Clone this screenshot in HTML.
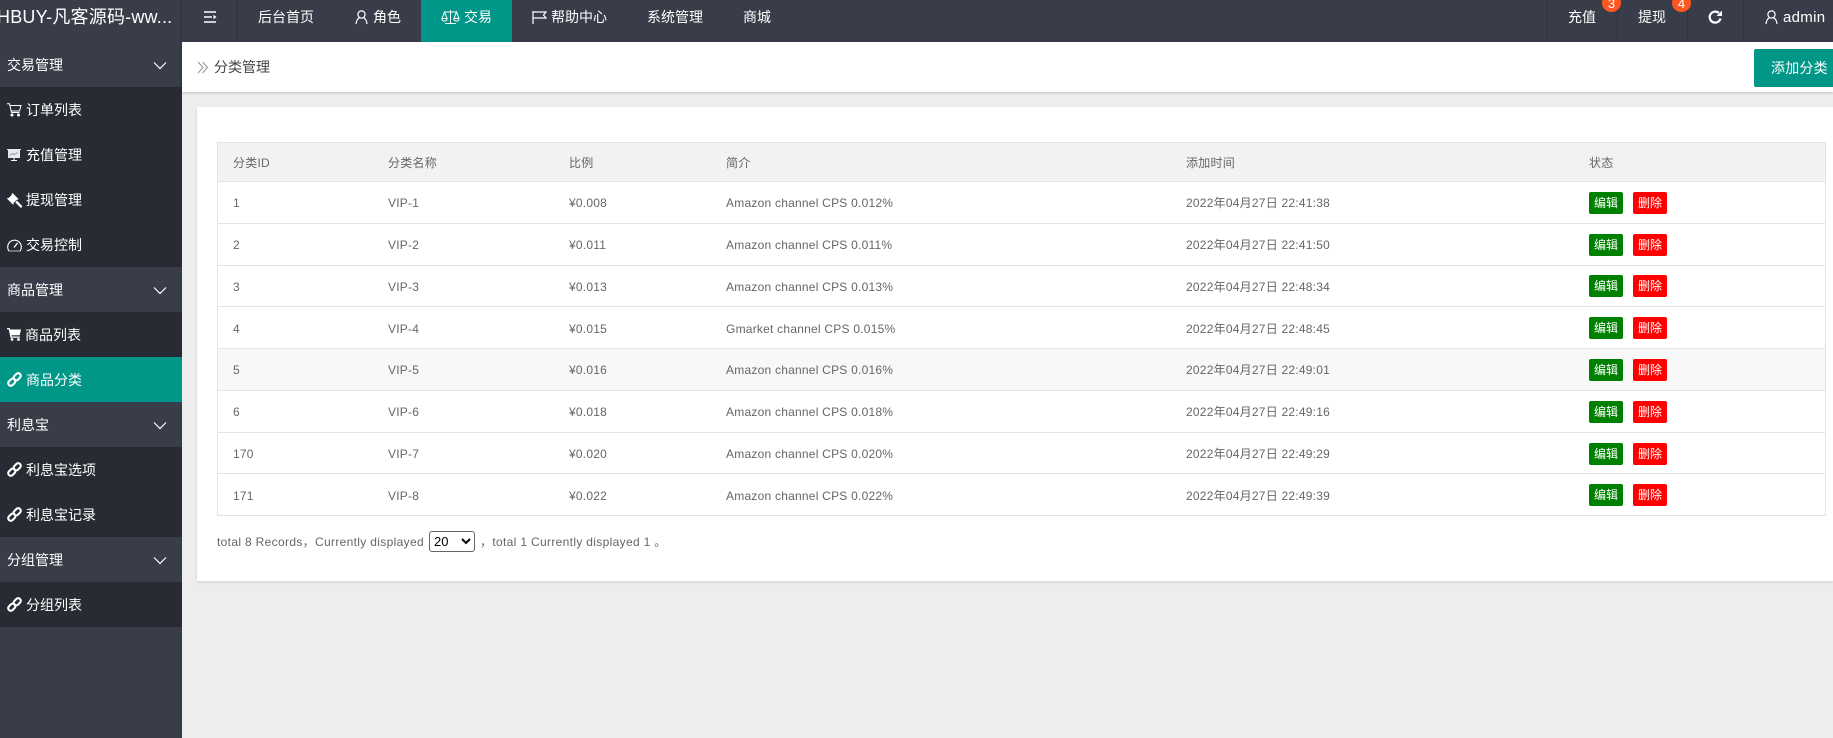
<!DOCTYPE html>
<html lang="zh"><head><meta charset="utf-8"><title>分类管理</title>
<style>
*{box-sizing:border-box}
html,body{margin:0;padding:0;width:1833px;height:738px;overflow:hidden;background:#ededed;font-family:"Liberation Sans","Noto Sans CJK SC",sans-serif}
.a{position:absolute;white-space:nowrap}
svg{position:absolute;display:block;overflow:visible}
#top{position:absolute;left:0;top:0;width:1833px;height:42px;background:#393d49}
.sep{position:absolute;top:0;width:1px;height:42px;background:#2f323d}
.n{position:absolute;top:0;line-height:35px;font-size:14px;color:#fff;white-space:nowrap}
.badge{position:absolute;top:-6px;width:19px;height:18px;border-radius:50%;background:#ff5722;color:#fff;font-size:13px;line-height:20px;text-align:center}
#side{position:absolute;left:0;top:42px;width:182px;height:696px;background:#393d49}
.s{position:absolute;left:0;width:182px;height:45px;font-size:14px;color:#fff;line-height:47px;white-space:nowrap}
.s.g{background:#393d49;padding-left:7px}
.s.i{background:#282b33;padding-left:26px}
.s.on{background:#009688}
#head{position:absolute;left:182px;top:42px;width:1651px;height:50px;background:#fff;box-shadow:0 1px 3px rgba(0,0,0,.18)}
#panel{position:absolute;left:197px;top:107px;width:1636px;height:474px;background:#fff;box-shadow:0 1px 3px rgba(0,0,0,.12)}
#tb{position:absolute;left:217px;top:142px;width:1609px;height:374px;border:1px solid #e4e4e4;border-bottom:1px solid #e2e2e2}
.hr{position:absolute;left:0;width:1607px;height:1px;background:#e4e4e4}
.c{position:absolute;font-size:12px;color:#666;white-space:nowrap;line-height:20px;letter-spacing:.23px}
.f{letter-spacing:.33px}
.b{position:absolute;width:34px;height:22px;border-radius:2px;color:#fff;font-size:12px;line-height:23px;text-align:center}
.gr{background:#008000}.rd{background:#f00}
select{position:absolute;left:429px;top:531px;width:46px;height:21px;font:13px "Liberation Sans",sans-serif;color:#000;background:#fff;border:1px solid #666;border-radius:3px;padding:0}
</style></head><body>
<div id="top">
<div class="a" style="left:-3px;top:0;width:182px;overflow:hidden;line-height:35px;font-size:18px;color:#fff;letter-spacing:.2px">HBUY-凡客源码-ww...</div>
<div class="sep" style="left:181px"></div><div class="sep" style="left:237px"></div>
<svg style="left:203px;top:10px" width="15" height="14"><path d="M1 2h12M1 7h8M1 12h12" stroke="#fff" stroke-width="1.6"/><path d="M10.5 4.8L13.5 7l-3 2.2z" fill="#fff"/></svg>
<div class="n" style="left:258px">后台首页</div>
<svg style="left:355px;top:10px" width="13" height="15" fill="none" stroke="#fff" stroke-width="1.2"><circle cx="6.5" cy="4.5" r="3.6"/><path d="M1 14c.4-3.6 2-5.6 3.500-6.200M12 14c-.4-3.600-2-5.600-3.500-6.200"/></svg>
<div class="n" style="left:373px">角色</div>
<div class="a" style="left:421px;top:0;width:91px;height:42px;background:#009688"></div>
<svg style="left:441px;top:9px" width="19" height="16" fill="none" stroke="#fff" stroke-width="1"><path d="M9.500 1v13M4 14.500h11M3 3h13"/><path d="M3.500 3L1 9.500h5zM15.500 3L13 9.500h5z"/><path d="M.8 9.500a2.700 2.600 0 0 0 5.400 0zM12.800 9.500a2.700 2.600 0 0 0 5.400 0z"/></svg>
<div class="n" style="left:464px">交易</div>
<svg style="left:532px;top:10px" width="15" height="15" fill="none" stroke="#fff" stroke-width="1.200"><path d="M1 1v13M1 2h13l-2.500 3 2.500 3H1"/></svg>
<div class="n" style="left:551px">帮助中心</div>
<div class="n" style="left:647px">系统管理</div>
<div class="n" style="left:743px">商城</div>
<div class="sep" style="left:1547px"></div><div class="sep" style="left:1617px"></div><div class="sep" style="left:1687px"></div><div class="sep" style="left:1743px"></div>
<div class="n" style="left:1568px">充值</div><div class="badge" style="left:1602px">3</div>
<div class="n" style="left:1638px">提现</div><div class="badge" style="left:1672px">4</div>
<svg style="left:1708px;top:10px" width="14" height="14" fill="none" stroke="#fff" stroke-width="2.200"><path d="M12.500 8.500A5.500 5.500 0 1 1 10.800 3"/><path d="M8.500 6h5.500v-5.500z" fill="#fff" stroke="none"/></svg>
<svg style="left:1765px;top:10px" width="13" height="15" fill="none" stroke="#fff" stroke-width="1.200"><circle cx="6.5" cy="4.500" r="3.600"/><path d="M1 14c.4-3.600 2-5.600 3.500-6.200M12 14c-.4-3.600-2-5.600-3.500-6.200"/></svg>
<div class="n" style="left:1783px;font-size:15px;letter-spacing:.3px">admin</div>
</div>

<div id="side">
<div class="s g" style="top:0">交易管理</div>
<div class="s i" style="top:45px">订单列表</div>
<div class="s i" style="top:90px">充值管理</div>
<div class="s i" style="top:135px">提现管理</div>
<div class="s i" style="top:180px">交易控制</div>
<div class="s g" style="top:225px">商品管理</div>
<div class="s i" style="top:270px;padding-left:25px">商品列表</div>
<div class="s i on" style="top:315px">商品分类</div>
<div class="s g" style="top:360px">利息宝</div>
<div class="s i" style="top:405px">利息宝选项</div>
<div class="s i" style="top:450px">利息宝记录</div>
<div class="s g" style="top:495px">分组管理</div>
<div class="s i" style="top:540px">分组列表</div>
</div>
<svg style="left:153px;top:61px" width="14" height="9" fill="none" stroke="#fff" stroke-width="1.200"><path d="M1 1.500l6 6 6-6"/></svg>
<svg style="left:153px;top:286px" width="14" height="9" fill="none" stroke="#fff" stroke-width="1.200"><path d="M1 1.500l6 6 6-6"/></svg>
<svg style="left:153px;top:421px" width="14" height="9" fill="none" stroke="#fff" stroke-width="1.200"><path d="M1 1.500l6 6 6-6"/></svg>
<svg style="left:153px;top:556px" width="14" height="9" fill="none" stroke="#fff" stroke-width="1.200"><path d="M1 1.500l6 6 6-6"/></svg>
<!-- cart outline -->
<svg style="left:7px;top:103px" width="15" height="14" fill="none" stroke="#fff" stroke-width="1"><path d="M0 .7h2.500l2 8.800h8M3 2.500h11l-1.500 5.500H4.300"/><circle cx="5" cy="12" r="1" fill="#fff"/><circle cx="11.500" cy="12" r="1" fill="#fff"/></svg>
<!-- whiteboard -->
<svg style="left:7px;top:149px" width="14" height="13"><path d="M0 0h14v1H13v8H1V1H0z" fill="#e8e8ec"/><path d="M2.500 6.500l3-2 2 1 3-2" stroke="#9a9aa2" fill="none"/><path d="M6.500 9h1v2h-1zM4 11h6v1H4z" fill="#fff"/></svg>
<!-- gavel -->
<svg style="left:7px;top:193px" width="15" height="15" fill="#fff"><path d="M5.500 0l6 6-1 1-.6-.5L6.500 10l.5.6-1 1-6-6 1-1 .6.5L5 1.600 4.500 1z"/><path d="M8.200 9.200l1.700-1.700L14.800 12.600a1.200 1.200 0 0 1-1.700 1.700z"/></svg>
<!-- gauge -->
<svg style="left:7px;top:239px" width="15" height="13" fill="none" stroke="#fff" stroke-width="1.100"><path d="M2 12A6.800 6.800 0 1 1 13 12z"/><path d="M1.800 11.500h11.400v1H1.800z" fill="#bbb" stroke="none"/><path d="M7 8.500L10.500 4" stroke-width="1.400"/></svg>
<!-- cart filled -->
<svg style="left:7px;top:328px" width="14" height="13" fill="#fff"><path d="M0 0h2.700l.4 1.500H14l-1.300 5.700H4.500l.3 1.300h8v1.300H3.500L1.700 1.300H0z"/><circle cx="5" cy="11.500" r="1.400"/><circle cx="11.500" cy="11.500" r="1.400"/></svg>
<!-- links -->
<svg style="left:7px;top:372px" width="15" height="15" fill="none" stroke="#fff" stroke-width="2.100"><rect x="-4" y="-2.600" width="8" height="5.200" rx="2.600" transform="translate(4.800 10.200) rotate(-45)"/><rect x="-4" y="-2.600" width="8" height="5.200" rx="2.600" transform="translate(10.200 4.800) rotate(-45)"/></svg>
<svg style="left:7px;top:462px" width="15" height="15" fill="none" stroke="#fff" stroke-width="2.100"><rect x="-4" y="-2.600" width="8" height="5.200" rx="2.600" transform="translate(4.800 10.200) rotate(-45)"/><rect x="-4" y="-2.600" width="8" height="5.200" rx="2.600" transform="translate(10.200 4.800) rotate(-45)"/></svg>
<svg style="left:7px;top:507px" width="15" height="15" fill="none" stroke="#fff" stroke-width="2.100"><rect x="-4" y="-2.600" width="8" height="5.200" rx="2.600" transform="translate(4.800 10.200) rotate(-45)"/><rect x="-4" y="-2.600" width="8" height="5.200" rx="2.600" transform="translate(10.200 4.800) rotate(-45)"/></svg>
<svg style="left:7px;top:597px" width="15" height="15" fill="none" stroke="#fff" stroke-width="2.100"><rect x="-4" y="-2.600" width="8" height="5.200" rx="2.600" transform="translate(4.800 10.200) rotate(-45)"/><rect x="-4" y="-2.600" width="8" height="5.200" rx="2.600" transform="translate(10.200 4.800) rotate(-45)"/></svg>

<div id="head"></div>
<svg style="left:197px;top:61px" width="12" height="13" fill="none" stroke="#999" stroke-width="1.100"><path d="M1 1l5 5.500-5 5.500M5.500 1l5 5.500-5 5.500"/></svg>
<div class="a" style="left:214px;top:57px;font-size:14px;line-height:20px;color:#444">分类管理</div>
<div class="a" style="left:1754px;top:49px;width:90px;height:38px;background:#009688;border-radius:2px;color:#fff;font-size:14px;line-height:38px;padding-left:17px;letter-spacing:.2px">添加分类</div>

<div id="panel"></div>
<div id="tb">
<div style="position:absolute;left:0;top:0;width:1607px;height:38px;background:#f2f2f2"></div>
<div class="hr" style="top:38px"></div>
<div class="hr" style="top:80px"></div>
<div class="hr" style="top:122px"></div>
<div class="hr" style="top:163px"></div>
<div style="position:absolute;left:0;top:206px;width:1607px;height:41px;background:#f8f8f8"></div>
<div class="hr" style="top:205px"></div>
<div class="hr" style="top:247px"></div>
<div class="hr" style="top:289px"></div>
<div class="hr" style="top:330px"></div>
</div>

<div class="c" style="left:233px;top:153px">分类ID</div><div class="c" style="left:388px;top:153px">分类名称</div><div class="c" style="left:569px;top:153px">比例</div><div class="c" style="left:726px;top:153px">简介</div><div class="c" style="left:1186px;top:153px">添加时间</div><div class="c" style="left:1589px;top:153px">状态</div>

<div class="c" style="left:233px;top:193px">1</div><div class="c" style="left:388px;top:193px">VIP-1</div><div class="c" style="left:569px;top:193px">¥0.008</div><div class="c" style="left:726px;top:193px">Amazon channel CPS 0.012%</div><div class="c" style="left:1186px;top:193px">2022年04月27日 22:41:38</div><div class="b gr" style="left:1589px;top:192px">编辑</div><div class="b rd" style="left:1633px;top:192px">删除</div>

<div class="c" style="left:233px;top:235px">2</div><div class="c" style="left:388px;top:235px">VIP-2</div><div class="c" style="left:569px;top:235px">¥0.011</div><div class="c" style="left:726px;top:235px">Amazon channel CPS 0.011%</div><div class="c" style="left:1186px;top:235px">2022年04月27日 22:41:50</div><div class="b gr" style="left:1589px;top:234px">编辑</div><div class="b rd" style="left:1633px;top:234px">删除</div>

<div class="c" style="left:233px;top:277px">3</div><div class="c" style="left:388px;top:277px">VIP-3</div><div class="c" style="left:569px;top:277px">¥0.013</div><div class="c" style="left:726px;top:277px">Amazon channel CPS 0.013%</div><div class="c" style="left:1186px;top:277px">2022年04月27日 22:48:34</div><div class="b gr" style="left:1589px;top:275px">编辑</div><div class="b rd" style="left:1633px;top:275px">删除</div>

<div class="c" style="left:233px;top:319px">4</div><div class="c" style="left:388px;top:319px">VIP-4</div><div class="c" style="left:569px;top:319px">¥0.015</div><div class="c" style="left:726px;top:319px">Gmarket channel CPS 0.015%</div><div class="c" style="left:1186px;top:319px">2022年04月27日 22:48:45</div><div class="b gr" style="left:1589px;top:317px">编辑</div><div class="b rd" style="left:1633px;top:317px">删除</div>

<div class="c" style="left:233px;top:360px">5</div><div class="c" style="left:388px;top:360px">VIP-5</div><div class="c" style="left:569px;top:360px">¥0.016</div><div class="c" style="left:726px;top:360px">Amazon channel CPS 0.016%</div><div class="c" style="left:1186px;top:360px">2022年04月27日 22:49:01</div><div class="b gr" style="left:1589px;top:359px">编辑</div><div class="b rd" style="left:1633px;top:359px">删除</div>

<div class="c" style="left:233px;top:402px">6</div><div class="c" style="left:388px;top:402px">VIP-6</div><div class="c" style="left:569px;top:402px">¥0.018</div><div class="c" style="left:726px;top:402px">Amazon channel CPS 0.018%</div><div class="c" style="left:1186px;top:402px">2022年04月27日 22:49:16</div><div class="b gr" style="left:1589px;top:401px">编辑</div><div class="b rd" style="left:1633px;top:401px">删除</div>

<div class="c" style="left:233px;top:444px">170</div><div class="c" style="left:388px;top:444px">VIP-7</div><div class="c" style="left:569px;top:444px">¥0.020</div><div class="c" style="left:726px;top:444px">Amazon channel CPS 0.020%</div><div class="c" style="left:1186px;top:444px">2022年04月27日 22:49:29</div><div class="b gr" style="left:1589px;top:443px">编辑</div><div class="b rd" style="left:1633px;top:443px">删除</div>

<div class="c" style="left:233px;top:486px">171</div><div class="c" style="left:388px;top:486px">VIP-8</div><div class="c" style="left:569px;top:486px">¥0.022</div><div class="c" style="left:726px;top:486px">Amazon channel CPS 0.022%</div><div class="c" style="left:1186px;top:486px">2022年04月27日 22:49:39</div><div class="b gr" style="left:1589px;top:484px">编辑</div><div class="b rd" style="left:1633px;top:484px">删除</div>

<div class="c f" style="left:217px;top:532px">total 8 Records，Currently displayed</div>
<select><option>20</option></select>
<div class="c f" style="left:480px;top:532px">，total 1 Currently displayed 1 。</div>
</body></html>
